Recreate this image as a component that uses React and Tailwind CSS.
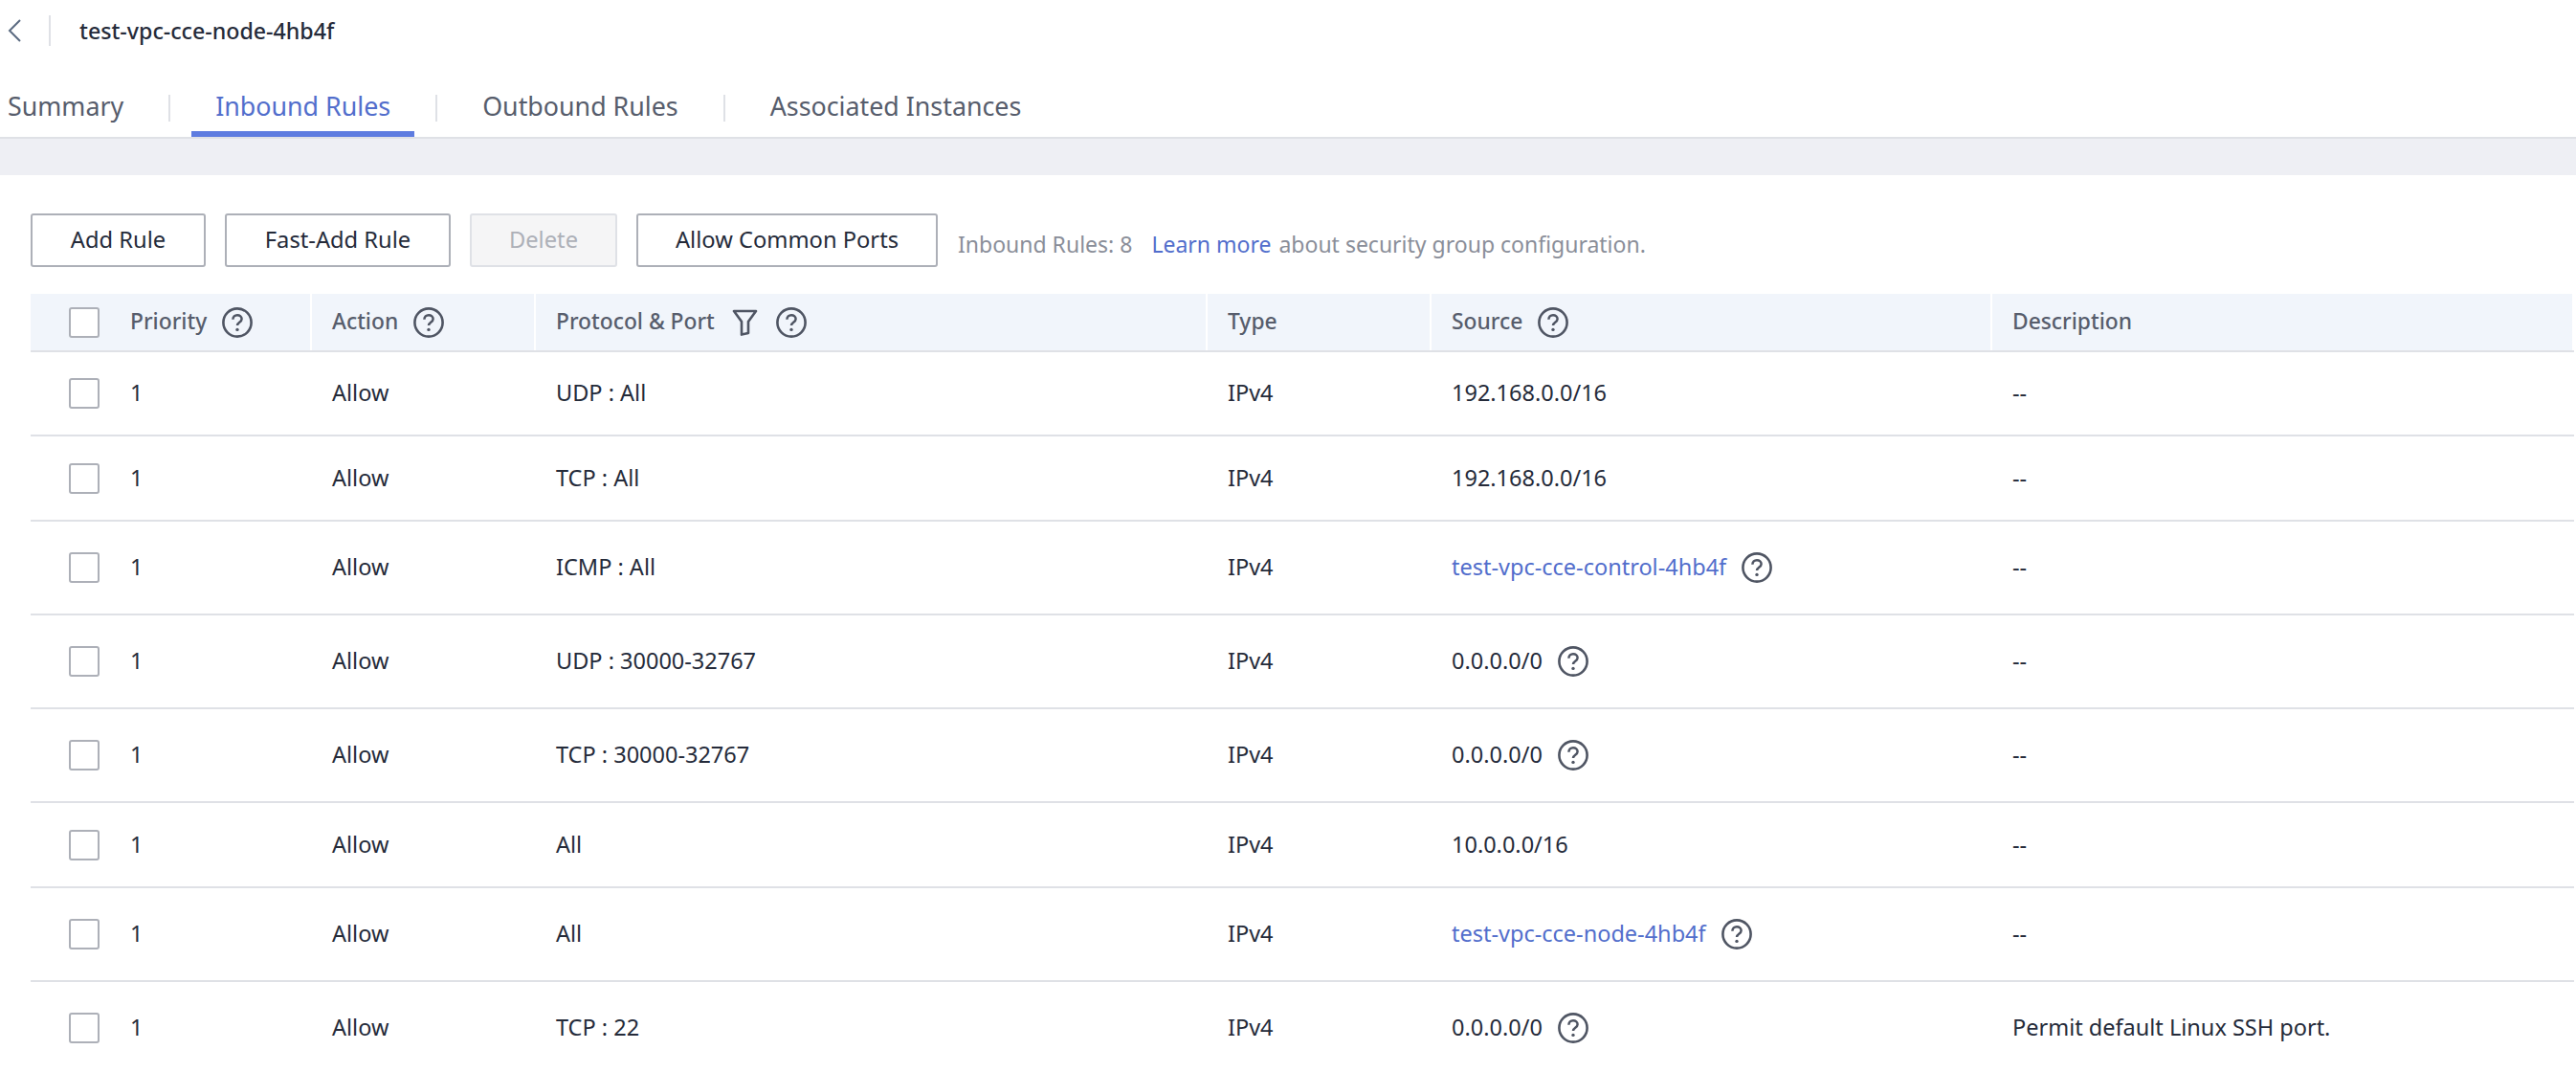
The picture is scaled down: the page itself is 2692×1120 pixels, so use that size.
import React from 'react'

const HelpIcon = () => (
  <svg width="32" height="32" viewBox="0 0 32 32" fill="none" className="shrink-0">
    <circle cx="16" cy="16" r="14.6" stroke="#4f5563" strokeWidth="2.6" />
    <path d="M11.4 12.8c0-2.8 2-4.6 4.6-4.6s4.6 1.7 4.6 4.1c0 3.5-4.6 3.4-4.6 6.7" stroke="#4f5563" strokeWidth="2.5" />
    <circle cx="16" cy="23.4" r="1.7" fill="#4f5563" />
  </svg>
)

const FilterIcon = () => (
  <svg width="27" height="28" viewBox="0 0 27 28" fill="none" className="shrink-0 ml-[2px] mr-[3px]">
    <path d="M2 2h23L17 13v12l-7 1.6V13L2 2z" stroke="#4f5563" strokeWidth="2.6" strokeLinejoin="round" />
  </svg>
)

const Checkbox = () => (
  <span className="block w-[32px] h-[32px] bg-white border-2 border-[#adb0b8] rounded-[3px]"></span>
)

const columns = 'grid grid-cols-[83px_211px_234px_702px_234px_586px_608px]'

const rows = [
  { h: 'h-[88px]', proto: 'UDP : All', source: '192.168.0.0/16', desc: '--' },
  { h: 'h-[89px]', proto: 'TCP : All', source: '192.168.0.0/16', desc: '--' },
  { h: 'h-[98px]', proto: 'ICMP : All', source: 'test-vpc-cce-control-4hb4f', link: true, help: true, desc: '--' },
  { h: 'h-[98px]', proto: 'UDP : 30000-32767', source: '0.0.0.0/0', help: true, desc: '--' },
  { h: 'h-[98px]', proto: 'TCP : 30000-32767', source: '0.0.0.0/0', help: true, desc: '--' },
  { h: 'h-[89px]', proto: 'All', source: '10.0.0.0/16', desc: '--' },
  { h: 'h-[98px]', proto: 'All', source: 'test-vpc-cce-node-4hb4f', link: true, help: true, desc: '--' },
  { h: 'h-[98px]', proto: 'TCP : 22', source: '0.0.0.0/0', help: true, desc: 'Permit default Linux SSH port.' },
]

const Tab = ({ label, active, first }) => (
  <div
    className={`h-[60px] flex items-start pt-[8px] border-b-[6px] text-[26.8px] leading-[40px] ${first ? 'pl-[8px] pr-[25px]' : 'px-[25px]'} ${
      active ? 'border-[#5e7ce0] text-[#526ecc]' : 'border-transparent text-[#575d6c]'
    }`}
  >
    {label}
  </div>
)

const TabDivider = () => <div className="w-[2px] h-[28px] mx-[22px] mb-[16px] bg-[#dfe1e6]"></div>

const Button = ({ children, disabled, className }) => (
  <button
    className={`h-[56px] border-2 rounded-[3px] text-[23.7px] ${
      disabled ? 'bg-[#f5f5f6] border-[#dfe1e6] text-[#adb0b8]' : 'bg-white border-[#adb0b8] text-[#252b3a]'
    } ${className}`}
  >
    {children}
  </button>
)

const HeadCell = ({ children }) => (
  <div className="flex items-center gap-[16px] pl-[21px] border-r-2 border-white text-[22.8px] font-medium text-[#575d6c]">
    {children}
  </div>
)

export default function App() {
  return (
    <div className="h-[1120px] overflow-hidden bg-white font-['Noto_Sans',sans-serif]">
      {/* title */}
      <div className="h-[64px] flex items-center">
        <svg width="14" height="24" viewBox="0 0 14 24" fill="none" className="ml-[8px]">
          <path d="M13 1L2 12l11 11" stroke="#5a6a80" strokeWidth="2" />
        </svg>
        <div className="w-[2px] h-[32px] ml-[29px] bg-[#dfe1e6]"></div>
        <h1 className="ml-[30px] text-[23.2px] font-medium text-[#252b3a]">test-vpc-cce-node-4hb4f</h1>
      </div>

      {/* tabs */}
      <div className="h-[81px] flex items-end border-b-2 border-[#dfe1e6]">
        <div className="flex items-end">
          <Tab label="Summary" first />
          <TabDivider />
          <Tab label="Inbound Rules" active />
          <TabDivider />
          <Tab label="Outbound Rules" />
          <TabDivider />
          <Tab label="Associated Instances" />
        </div>
      </div>
      <div className="h-[38px] bg-[#eeeff4]"></div>

      {/* toolbar */}
      <div className="flex items-center gap-[20px] pl-[32px] pt-[40px] pb-[28px]">
        <Button className="w-[183px]">Add Rule</Button>
        <Button className="w-[236px]">Fast-Add Rule</Button>
        <Button disabled className="w-[154px]">Delete</Button>
        <Button className="w-[315px]">Allow Common Ports</Button>
        <p className="ml-[1px] mt-[8px] text-[23px] text-[#8a8e99]">
          Inbound Rules: 8<a className="ml-[20px] mr-[2px] text-[#526ecc]">Learn more</a> about security group configuration.
        </p>
      </div>

      {/* table */}
      <div className="ml-[32px] mr-[2px]">
        <div className={`${columns} h-[61px] bg-[#f1f5fb] border-b-2 border-[#dfe1e6]`}>
          <div className="flex items-center pl-[40px]">
            <Checkbox />
          </div>
          <HeadCell>Priority <HelpIcon /></HeadCell>
          <HeadCell>Action <HelpIcon /></HeadCell>
          <HeadCell>Protocol &amp; Port <FilterIcon /> <HelpIcon /></HeadCell>
          <HeadCell>Type</HeadCell>
          <HeadCell>Source <HelpIcon /></HeadCell>
          <HeadCell>Description</HeadCell>
        </div>
        {rows.map((row, i) => (
          <div key={i} className={`${columns} ${row.h} items-center border-b-2 border-[#dfe1e6] text-[23.5px] text-[#252b3a]`}>
            <div className="pl-[40px]"><Checkbox /></div>
            <div className="pl-[21px]">1</div>
            <div className="pl-[21px]">Allow</div>
            <div className="pl-[21px]">{row.proto}</div>
            <div className="pl-[21px]">IPv4</div>
            <div className="pl-[21px] flex items-center gap-[16px]">
              <span className={row.link ? 'text-[#526ecc]' : ''}>{row.source}</span>
              {row.help && <HelpIcon />}
            </div>
            <div className="pl-[21px]">{row.desc}</div>
          </div>
        ))}
      </div>
    </div>
  )
}
